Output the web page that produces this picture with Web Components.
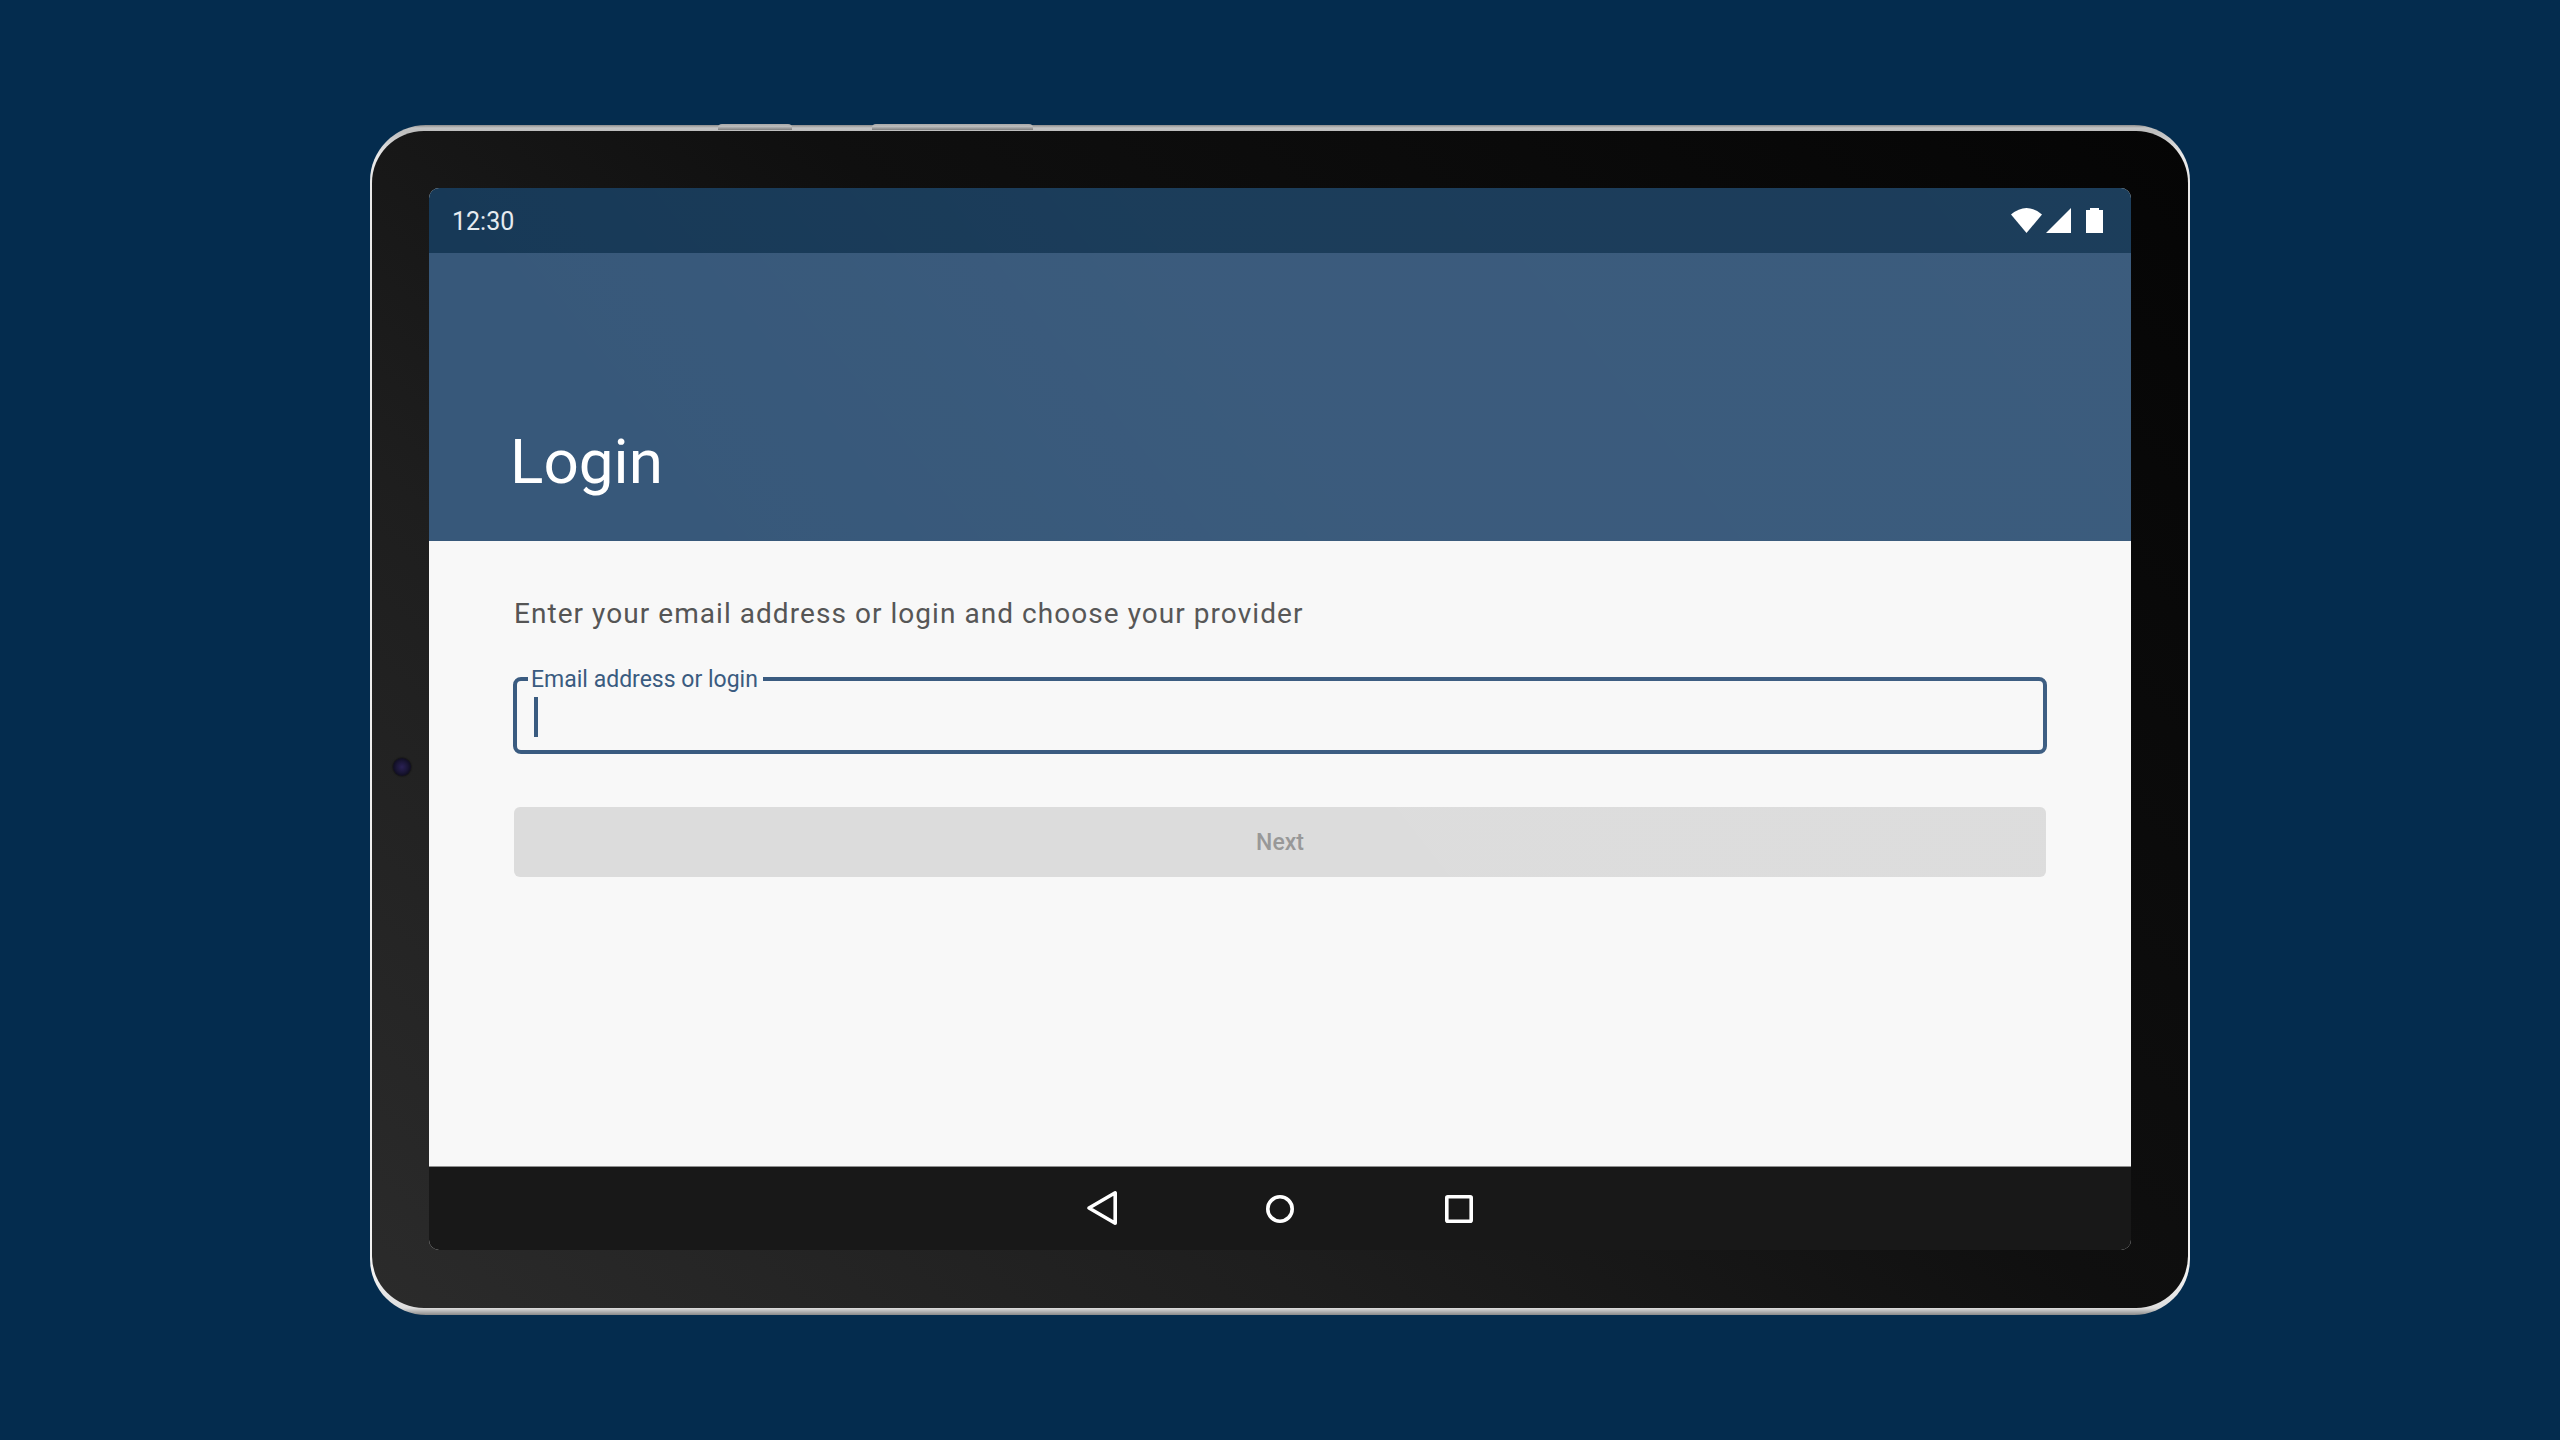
<!DOCTYPE html>
<html lang="en">
<head>
<meta charset="utf-8">
<title>Login</title>
<style>
html,body{margin:0;padding:0;height:100%}
body{background:#042c4e;display:flex;align-items:center;justify-content:center;height:1440px;font-family:Roboto,sans-serif;overflow:hidden}
</style>
</head>
<body>
<device-frame>
  <status-bar>12:30</status-bar>
  <app-header>Login</app-header>
  <login-form>
    <span slot="intro">Enter your email address or login and choose your provider</span>
    <outlined-field slot="field">Email address or login</outlined-field>
    <action-button slot="action">Next</action-button>
  </login-form>
  <nav-bar></nav-bar>
</device-frame>
<script>
function def(name, html){
  customElements.define(name, class extends HTMLElement{
    constructor(){super();const t=document.createElement('template');t.innerHTML=html;this.attachShadow({mode:'open'}).appendChild(t.content.cloneNode(true));}
  });
}
def('device-frame',`<style>
:host{display:block;position:relative;width:1820px;height:1190px;box-sizing:border-box;border-radius:56px;padding:6px 2px 7px;
 background:linear-gradient(180deg,#8d8d8d 0,#c4c4c4 3px,#bdbdbd 6px,#e8e8e8 30px,#f2f2f2 1150px,#dedede 1183px,#8a8a8a 1190px)}
.shell{height:100%;box-sizing:border-box;border-radius:52px;padding:57px 57px 58px;
 background:linear-gradient(42deg,#2b2b2b 0%,#1e1e1e 30%,#0f0f0f 56%,#050505 100%)}
.screen{position:relative;height:100%;display:flex;flex-direction:column;border-radius:10px;overflow:hidden;background:#f8f8f8}
.glare{position:absolute;inset:0;pointer-events:none;background:linear-gradient(52deg,rgba(255,255,255,0) 30%,rgba(255,255,255,.02) 60%,rgba(255,255,255,.025) 100%)}
.btn{position:absolute;top:-1px;height:6px;border-radius:4px 4px 0 0;background:linear-gradient(180deg,#a8a8a8,#bcbcbc 40%,#7f7f7f)}
.b1{left:348px;width:74px}.b2{left:502px;width:161px}
.cam{position:absolute;left:23px;top:633px;width:18px;height:18px;border-radius:50%;background:radial-gradient(circle at 50% 50%,#2a2155 0,#1a1636 45%,#08070f 90%);box-shadow:0 0 2px #000}
</style>
<div class="btn b1"></div><div class="btn b2"></div>
<div class="shell"><div class="screen"><slot></slot><div class="glare"></div></div></div>
<div class="cam"></div>`);
def('status-bar',`<style>
:host{display:flex;align-items:center;justify-content:space-between;height:65px;flex:none;box-sizing:border-box;padding:2px 28px 0 23px;background:#173957;color:#e6ebf0;font:400 25px/1 Roboto,sans-serif}
svg{display:block;margin-top:-2px}
</style>
<slot></slot>
<svg width="92" height="25" viewBox="0 0 92 25" fill="#fff" aria-hidden="true">
<path d="M0 6.5Q15.5 -6.5 31 6.5L15.5 25Z"/>
<path d="M35 25L60 0V25Z"/>
<path d="M75 2H79V0H88V2H92V25H75Z"/>
</svg>`);
def('app-header',`<style>
:host{display:flex;align-items:flex-end;height:288px;flex:none;box-sizing:border-box;padding:0 0 44px 81px;background:#37587a;color:#fff;font:400 62px/70px Roboto,sans-serif}
</style><slot></slot>`);
def('login-form',`<style>
:host{display:block;flex:1;box-sizing:border-box;padding:55px 85px 0;background:#f8f8f8;color:#555;font:400 28px/36px Roboto,sans-serif;letter-spacing:1.05px}
.intro{margin-bottom:45px}
.f{margin:0 -1px 53px}
</style>
<div class="intro"><slot name="intro"></slot></div>
<div class="f"><slot name="field"></slot></div>
<slot name="action"></slot>`);
def('outlined-field',`<style>
:host{display:block;position:relative;height:77px;box-sizing:border-box;border:4px solid #3a5b80;border-radius:8px;letter-spacing:0}
.lab{position:absolute;left:11px;top:-15px;padding:0 5px 0 3px;background:#f8f8f8;color:#3a5b80;font:400 23px/28px Roboto,sans-serif}
.caret{position:absolute;left:17px;top:16px;width:4px;height:40px;background:#3a5b80}
</style><span class="lab"><slot></slot></span><div class="caret"></div>`);
def('action-button',`<style>
:host{display:flex;align-items:center;justify-content:center;height:70px;box-sizing:border-box;padding-top:1px;border-radius:6px;background:#dcdcdc;color:#979797;font:500 23px/1 Roboto,sans-serif;letter-spacing:0}
</style><slot></slot>`);
def('nav-bar',`<style>
:host{position:relative;z-index:1;display:flex;align-items:center;justify-content:center;gap:139px;height:84px;flex:none;background:#181818;box-shadow:inset 0 1px 0 #8f8f8f;box-sizing:border-box}
svg{display:block;fill:none;stroke:#fff;stroke-width:3.6;stroke-linejoin:round}
</style>
<svg width="40" height="40" viewBox="0 0 40 40"><path d="M8 20L34.2 4.8V35.2Z"/></svg>
<svg width="40" height="40" viewBox="0 0 40 40"><circle cx="20" cy="21" r="12.2"/></svg>
<svg width="40" height="40" viewBox="0 0 40 40"><rect x="7.8" y="8.8" width="24.4" height="24.4" rx="1"/></svg>`);
</script>
</body>
</html>
